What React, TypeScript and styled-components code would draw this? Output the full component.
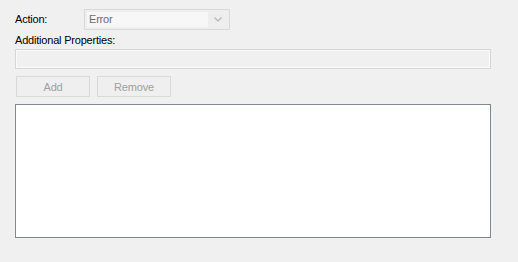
import React from 'react';
import styled, { createGlobalStyle } from 'styled-components';

const GlobalStyle = createGlobalStyle`
  html, body {
    margin: 0;
    padding: 0;
    background: #f0f0f0;
  }
  body {
    font-family: "Liberation Sans", Arial, sans-serif;
    font-size: 11px;
    color: #000;
  }
`;

const Panel = styled.div`
  display: flex;
  flex-direction: column;
  width: 518px;
  height: 262px;
  box-sizing: border-box;
  padding: 9px 27px 0 15px;
`;

const FieldRow = styled.div`
  display: flex;
  align-items: center;
  height: 21px;
`;

const Label = styled.span<{ $width?: number }>`
  display: block;
  width: ${p => (p.$width ? `${p.$width}px` : 'auto')};
  line-height: 13px;
  letter-spacing: -0.2px;
  white-space: nowrap;
`;

const SectionLabel = styled(Label)`
  margin-top: 4px;
`;

const Combo = styled.div`
  display: flex;
  align-items: center;
  box-sizing: border-box;
  width: 146px;
  height: 21px;
  border: 1px solid #d9d9d9;
  background: #eeeeee;
  padding: 2px;
`;

const ComboText = styled.div`
  flex: 1;
  height: 15px;
  line-height: 15px;
  background: #f7f7f7;
  color: #6d6d6d;
  padding-left: 2px;
  letter-spacing: -0.2px;
`;

const ComboArrow = styled.div`
  width: 19px;
  display: flex;
  align-items: center;
  justify-content: center;
`;

const TextField = styled.div`
  box-sizing: border-box;
  margin-top: 2px;
  width: 476px;
  height: 20px;
  border: 1px solid #d6d6d6;
  box-shadow: inset 0 0 0 1px #fafafa;
  background: #f0f0f0;
`;

const ButtonRow = styled.div`
  display: flex;
  gap: 7px;
  margin-top: 7px;
  padding-left: 1px;
`;

const Button = styled.button`
  box-sizing: border-box;
  width: 74px;
  height: 21px;
  margin: 0;
  padding: 0;
  border: 1px solid #d9d9d9;
  background: #efefef;
  color: #a0a0a0;
  font-family: "Liberation Sans", Arial, sans-serif;
  font-size: 11px;
  letter-spacing: -0.2px;
`;

const ListBox = styled.div`
  box-sizing: border-box;
  margin-top: 7px;
  width: 476px;
  height: 134px;
  border: 1px solid #828790;
  background: #ffffff;
`;

const App: React.FC = () => (
  <>
    <GlobalStyle />
    <Panel>
      <FieldRow>
        <Label $width={69}>Action:</Label>
        <Combo>
          <ComboText>Error</ComboText>
          <ComboArrow>
            <svg width="8" height="5" viewBox="0 0 8 5">
              <path d="M0.5 0.5 L4 4 L7.5 0.5" fill="none" stroke="#b4b4b4" strokeWidth="1.2" />
            </svg>
          </ComboArrow>
        </Combo>
      </FieldRow>
      <SectionLabel>Additional Properties:</SectionLabel>
      <TextField />
      <ButtonRow>
        <Button disabled>Add</Button>
        <Button disabled>Remove</Button>
      </ButtonRow>
      <ListBox />
    </Panel>
  </>
);

export default App;
